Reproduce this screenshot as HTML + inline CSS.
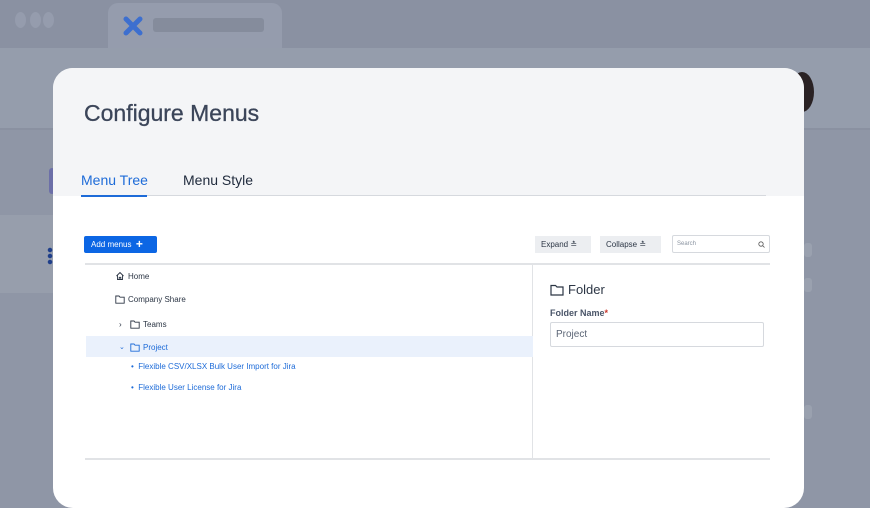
<!DOCTYPE html>
<html><head><meta charset="utf-8"><style>
*{box-sizing:border-box;margin:0;padding:0}
body{width:870px;height:495px;overflow:hidden;position:relative;background:#8f96a6;font-family:"Liberation Sans",sans-serif}
.abs{position:absolute}
.card{left:53px;top:68px;width:751px;height:440px;border-radius:20px;background:#fff;overflow:hidden}
.top{left:0;top:0;width:751px;height:128px;background:#f4f5f7}
.t{font-size:8px;color:#2c3645;display:flex;align-items:center;gap:3px;height:10px}
.b{color:#1d6bd8}
svg{display:block}
</style></head><body>
<div class="abs" style="left:0;top:0;width:870px;height:48px;background:#8a91a2"></div>
<div class="abs" style="left:108px;top:3px;width:174px;height:46px;background:#959cad;border-radius:10px 10px 0 0"></div>
<div class="abs" style="left:15px;top:12px;width:11px;height:16px;border-radius:50%;background:#959cad"></div>
<div class="abs" style="left:30px;top:12px;width:11px;height:16px;border-radius:50%;background:#959cad"></div>
<div class="abs" style="left:43px;top:12px;width:11px;height:16px;border-radius:50%;background:#959cad"></div>
<svg class="abs" style="left:122px;top:15px" width="22" height="22" viewBox="0 0 22 22"><path d="M4 4 Q11 11 18 18 M18 4 Q11 11 4 18" stroke="#3d6fcf" stroke-width="5" fill="none" stroke-linecap="round"/></svg>
<div class="abs" style="left:153px;top:18px;width:111px;height:14px;background:#858c9c;border-radius:3px"></div>
<div class="abs" style="left:0;top:48px;width:870px;height:82px;background:#959dac;border-bottom:2px solid #8a91a1"></div>
<div class="abs" style="left:790px;top:72px;width:24px;height:40px;border-radius:50%;background:#2a2224"></div>
<div class="abs" style="left:0;top:215px;width:53px;height:78px;background:#979eac"></div>
<div class="abs" style="left:49px;top:168px;width:6px;height:26px;background:#6c6fa8;border-radius:3px"></div>
<div class="abs" style="left:47px;top:247px;width:6px;height:18px;background:radial-gradient(circle,#1f3f8a 2px,transparent 2.5px) 0 0/6px 6px"></div>
<div class="abs" style="left:804px;top:243px;width:8px;height:14px;background:#9aa1af;border-radius:3px"></div>
<div class="abs" style="left:804px;top:278px;width:8px;height:14px;background:#9aa1af;border-radius:3px"></div>
<div class="abs" style="left:804px;top:405px;width:8px;height:14px;background:#9aa1af;border-radius:3px"></div>

<div class="abs card">
 <div class="abs top"></div>
 <div class="abs" style="left:31px;top:32px;font-size:23px;color:#3b4559;-webkit-text-stroke:0.3px #3b4559">Configure Menus</div>
 <div class="abs" style="left:28px;top:104px;font-size:14px;color:#1d6bd8">Menu Tree</div>
 <div class="abs" style="left:130px;top:104px;font-size:14px;color:#1f2a3c">Menu Style</div>
 <div class="abs" style="left:28px;top:127px;width:685px;height:1px;background:#d6d9de"></div>
 <div class="abs" style="left:28px;top:127px;width:66px;height:2px;background:#1d6bd8"></div>

 <div class="abs" style="left:31px;top:168px;width:73px;height:17px;background:#0c66e4;border-radius:2px;color:#fff;font-size:8px;line-height:17px;padding-left:7px">Add menus&nbsp;&nbsp;<b style="font-size:12px;vertical-align:-1px">+</b></div>
 <div class="abs" style="left:482px;top:168px;width:56px;height:17px;background:#eceef1;font-size:8px;line-height:17px;padding-left:6px;color:#2c3645">Expand ≛</div>
 <div class="abs" style="left:547px;top:168px;width:61px;height:17px;background:#eceef1;font-size:8px;line-height:17px;padding-left:6px;color:#2c3645">Collapse ≛</div>
 <div class="abs" style="left:619px;top:167px;width:98px;height:18px;border:1px solid #d6d9de;border-radius:2px;font-size:6px;line-height:16px;padding-left:4px;color:#8a93a0">Search
  <svg class="abs" style="right:4px;top:5px" width="7" height="7" viewBox="0 0 7 7"><circle cx="3" cy="3" r="2.2" stroke="#555" fill="none" stroke-width="0.8"/><path d="M4.6 4.6 L6.5 6.5" stroke="#555" stroke-width="0.8"/></svg></div>
 <div class="abs" style="left:32px;top:195px;width:685px;height:2px;background:#e1e3e6"></div>
 <div class="abs" style="left:479px;top:196px;width:1px;height:194px;background:#e1e3e6"></div>
 <div class="abs" style="left:32px;top:390px;width:685px;height:2px;background:#e1e3e6"></div>

 <div class="abs t" style="left:62px;top:203px"><svg width="10" height="10" viewBox="0 0 10 10"><path d="M1.5 5 L5 1.5 L8.5 5 M2.5 4.2 V8.5 H7.5 V4.2 M4.2 8.5 V6.3 H5.8 V8.5" stroke="#2c3645" fill="none" stroke-width="0.9"/></svg>Home</div>
 <div class="abs t" style="left:62px;top:226px"><svg width="10" height="9" viewBox="0 0 10 9"><path d="M0.8 1 H4 L5 2.2 H9.2 V8.2 H0.8 Z" stroke="#2c3645" fill="none" stroke-width="0.9"/></svg>Company Share</div>
 <div class="abs t" style="left:66px;top:251px"><span style="font-size:8px;width:8px">›</span><svg width="10" height="9" viewBox="0 0 10 9"><path d="M0.8 1 H4 L5 2.2 H9.2 V8.2 H0.8 Z" stroke="#2c3645" fill="none" stroke-width="0.9"/></svg>Teams</div>
 <div class="abs" style="left:33px;top:268px;width:447px;height:21px;background:#eaf1fc"></div>
 <div class="abs t b" style="left:66px;top:274px"><span style="font-size:7px;width:8px">⌄</span><svg width="10" height="9" viewBox="0 0 10 9"><path d="M0.8 1 H4 L5 2.2 H9.2 V8.2 H0.8 Z" stroke="#1d6bd8" fill="none" stroke-width="0.9"/></svg>Project</div>
 <div class="abs t b" style="left:78px;top:293px">•&nbsp; Flexible CSV/XLSX Bulk User Import for Jira</div>
 <div class="abs t b" style="left:78px;top:314px">•&nbsp; Flexible User License for Jira</div>

 <div class="abs" style="left:497px;top:214px;font-size:13px;color:#2c3645;display:flex;align-items:center;gap:4px"><svg width="14" height="12" viewBox="0 0 14 12"><path d="M1 1.5 H5.5 L7 3 H13 V11 H1 Z" stroke="#2c3645" fill="none" stroke-width="1.2"/></svg>Folder</div>
 <div class="abs" style="left:497px;top:240px;font-size:9px;font-weight:bold;color:#4a5568">Folder Name<span style="color:#c9372c">*</span></div>
 <div class="abs" style="left:497px;top:254px;width:214px;height:25px;border:1px solid #d6d9de;border-radius:2px;font-size:10px;line-height:23px;padding-left:5px;color:#5b6575">Project</div>
</div>
</body></html>
